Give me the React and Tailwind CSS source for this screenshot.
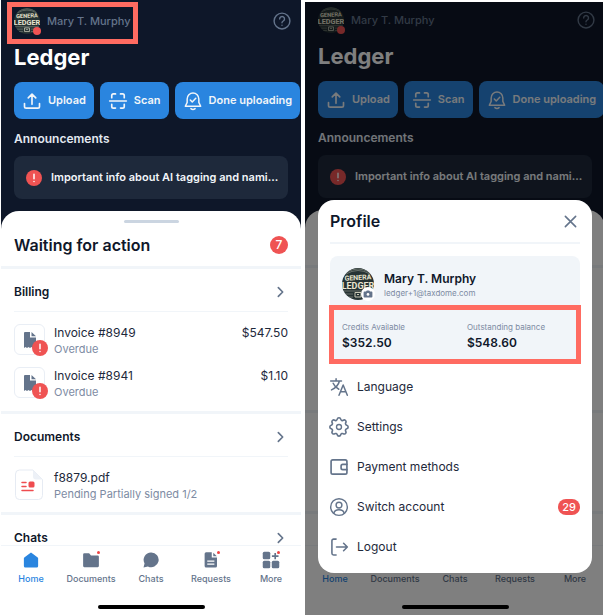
import { useId } from 'react'

const INVOICES = [
  { number: '8949', amount: '$547.50' },
  { number: '8941', amount: '$1.10' }
]

function Stroke({ children, className = 'size-5', width = 1.8 }) {
  return (
    <svg
      viewBox="0 0 24 24"
      fill="none"
      stroke="currentColor"
      strokeWidth={width}
      strokeLinecap="round"
      strokeLinejoin="round"
      className={`shrink-0 ${className}`}
      aria-hidden="true"
    >
      {children}
    </svg>
  )
}

function Solid({ children }) {
  return (
    <svg viewBox="0 0 24 24" fill="currentColor" className="size-[18px]" aria-hidden="true">
      {children}
    </svg>
  )
}

const UploadIcon = () => (
  <Stroke width={2}>
    <path d="M12 16V4M7.5 8.2 12 3.7l4.5 4.5M3 15v3.500a2 2 0 0 0 2 2h14a2 2 0 0 0 2-2V15" />
  </Stroke>
)

const ScanIcon = () => (
  <Stroke width={2}>
    <path d="M2 12h20M4.5 8V5.500a2 2 0 0 1 2-2H9M15 3.500h2.500a2 2 0 0 1 2 2V8M19.500 16v2.500a2 2 0 0 1-2 2H15M9 20.500H6.500a2 2 0 0 1-2-2V16" />
  </Stroke>
)

const BellCheckIcon = () => (
  <Stroke width={1.8}>
    <path d="M12 2.500a7 7 0 0 0-7 7v4.200l-2.200 4.600h18.400L19 13.700V9.500a7 7 0 0 0-7-7ZM9.500 21.200c1.400 1.100 3.600 1.100 5 0M8.800 10.800l2.300 2.300 4.200-4.300" />
  </Stroke>
)

const HelpIcon = () => (
  <Stroke width={1.7}>
    <circle cx="12" cy="12" r="9.500" />
    <path d="M9.200 9.500a2.900 2.900 0 1 1 4.400 2.500c-1.100.7-1.600 1.100-1.600 2.100M12 17v.1" />
  </Stroke>
)

const ChevronIcon = () => (
  <Stroke width={2.5} className="size-4 text-[#64748b]">
    <path d="m9.500 5.500 6.500 6.500-6.500 6.500" />
  </Stroke>
)

const LanguageIcon = () => (
  <Stroke>
    <path d="M2 4.800h13M8.500 2v2.800M12.500 4.800C11.500 9.500 8 13 3 15.500M5 7.500c1.200 3 3.500 5.500 6.800 7.200M12 22l5-12.500L22 22M13.800 17.700h6.400" />
  </Stroke>
)

const SettingsIcon = () => (
  <Stroke width={1.6}>
    <path d="M10.300 3.300c.4-1.800 3-1.800 3.400 0a1.700 1.700 0 0 0 2.600 1.100c1.500-1 3.300.8 2.400 2.400a1.700 1.700 0 0 0 1 2.500c1.800.5 1.800 3 0 3.400a1.700 1.700 0 0 0-1 2.600c.9 1.500-.9 3.300-2.400 2.400a1.700 1.700 0 0 0-2.600 1c-.4 1.800-3 1.800-3.400 0a1.700 1.700 0 0 0-2.600-1c-1.500.9-3.300-.9-2.400-2.400a1.700 1.700 0 0 0-1-2.600c-1.800-.4-1.800-2.900 0-3.400a1.700 1.700 0 0 0 1-2.500c-.9-1.600.9-3.400 2.400-2.400a1.700 1.700 0 0 0 2.600-1.100Z" transform="translate(-2.600 -1.400) scale(1.215)" />
    <circle cx="12" cy="12" r="3" />
  </Stroke>
)

const WalletIcon = () => (
  <Stroke width={2}>
    <rect x="2.500" y="3.500" width="19" height="17" rx="2" />
    <path d="M21.500 8.800h-5a2 2 0 0 0-2 2v2.400a2 2 0 0 0 2 2h5" />
  </Stroke>
)

const AccountIcon = () => (
  <Stroke width={1.7}>
    <circle cx="12" cy="12" r="10" />
    <circle cx="12" cy="9.700" r="3.500" />
    <path d="M5.800 19.500c.6-3 2.700-4.200 6.200-4.200s5.600 1.200 6.200 4.200" />
  </Stroke>
)

const LogoutIcon = () => (
  <Stroke width={1.9}>
    <path d="M8.500 2.500h-3a2 2 0 0 0-2 2v15a2 2 0 0 0 2 2h3M9 12h13M17.500 7.500 22 12l-4.500 4.500" />
  </Stroke>
)

const MENU = [
  { label: 'Language', Icon: LanguageIcon },
  { label: 'Settings', Icon: SettingsIcon },
  { label: 'Payment methods', Icon: WalletIcon },
  { label: 'Switch account', Icon: AccountIcon, count: 29 },
  { label: 'Logout', Icon: LogoutIcon }
]

const TABS = [
  {
    label: 'Home',
    active: true,
    icon: <path d="M12 2 3.500 8.200A2 2 0 0 0 2.500 9.800V20a2 2 0 0 0 2 2h15a2 2 0 0 0 2-2V9.800a2 2 0 0 0-1-1.600Z" />
  },
  {
    label: 'Documents',
    dot: true,
    icon: <path d="M1.500 4.500A1.500 1.500 0 0 1 3 3h6.500L12 6h9a1.500 1.500 0 0 1 1.500 1.500v12.500a1.500 1.500 0 0 1-1.500 1.500H3A1.500 1.500 0 0 1 1.500 20Z" />
  },
  {
    label: 'Chats',
    icon: <path d="M12.300 2a9.800 9.800 0 1 1-4.400 18.500L2 22l1.400-5.500A9.800 9.800 0 0 1 12.300 2Z" />
  },
  {
    label: 'Requests',
    dot: true,
    icon: (
      <>
        <path d="M5.500 1.500H13v7h7v11.500a2 2 0 0 1-2 2H5.500a2 2 0 0 1-2-2v-16.500a2 2 0 0 1 2-2Z" />
        <path d="M15 2.200 19.800 7H15Z" />
        <path d="M7 13.500h9.500M7 17.500h9.500" stroke="#fff" strokeWidth="1.600" />
      </>
    )
  },
  {
    label: 'More',
    dot: true,
    icon: (
      <>
        <rect x="1" y="1" width="10" height="10" rx="2" />
        <rect x="1" y="13" width="10" height="10" rx="2" />
        <rect x="13" y="13" width="10" height="10" rx="2" />
        <path d="M16.500 2.500h2.200v3.200H22v2.200h-3.300V11h-2.200V7.900h-3.300V5.700h3.300Z" />
      </>
    )
  }
]

function Avatar({ className }) {
  const id = useId()
  return (
    <svg viewBox="0 0 32 32" className={`block ${className}`} role="img" aria-label="General Ledger">
      <clipPath id={id}>
        <circle cx="16" cy="16" r="16" />
      </clipPath>
      <g clipPath={`url(#${id})`} fill="none">
        <rect width="32" height="32" fill="#263334" />
        <path d="M5 4q11-6 22 0M4 6q12-7 24 0M1 23h30M3 26h8m10 0h9M6 29h5m10 0h5" stroke="#68716b" />
        <path d="M13 24.500h6V29h-6zM15 26.500h2" stroke="#c8c8b6" />
      </g>
      <g fill="#e9e5d0" fontFamily="Roboto, sans-serif" fontWeight="700" textAnchor="middle">
        <text x="16" y="12" fontSize="7" transform="rotate(-3 16 12)">GENERA</text>
        <text x="16" y="21" fontSize="9">LEDGER</text>
      </g>
    </svg>
  )
}

function Alert({ className = '' }) {
  return (
    <svg viewBox="0 0 16 16" className={`size-4 shrink-0 ${className}`} role="img" aria-label="Alert">
      <circle cx="8" cy="8" r="8" fill="#ef5353" />
      <path d="M8 4.200v4.600M8 11.400v.1" stroke="#fff" strokeWidth="1.500" strokeLinecap="round" />
    </svg>
  )
}

function Section({ title, children }) {
  return (
    <section className="border-t-3 border-[#f1f5f9] px-[13px]">
      <button type="button" className="flex h-[43px] w-full items-center justify-between border-b border-[#f1f5f9] pt-1 text-[12px] font-semibold text-[#0f172a]">
        {title}
        <ChevronIcon />
      </button>
      {children}
    </section>
  )
}

function InvoiceIcon() {
  return (
    <span className="relative flex size-[31px] shrink-0 items-center justify-center rounded-md border border-[#e9eef5]">
      <svg viewBox="0 0 14 18" className="h-[18px] w-[14px] fill-[#64748b]" aria-hidden="true">
        <path d="M2 1h5v5.500h6V17l-1.500-1L10 17l-1.500-1L7 17l-1.500-1L4 17l-1.500-1L1 17V2a1 1 0 0 1 1-1Z" />
        <path d="M8.500 1 13 5.200H8.500Z" />
      </svg>
      <Alert className="absolute -right-1 -bottom-0.5" />
    </span>
  )
}

function PdfIcon() {
  return (
    <svg viewBox="0 0 31 32" className="h-8 w-[31px] shrink-0" fill="none" aria-hidden="true">
      <path d="M5.500 1H19l9.500 9.500v16a4 4 0 0 1-4 4h-19a4 4 0 0 1-4-4V5a4 4 0 0 1 4-4Z" fill="#fff" stroke="#e6ebf3" />
      <path d="M19 1v6.500a3 3 0 0 0 3 3h6.500Z" fill="#edf1f7" />
      <path d="M8 13.500h4M8 17.500h4M8 21.500h11" stroke="#ef4c4f" strokeWidth="1.500" strokeLinecap="round" />
      <rect x="14.500" y="12.500" width="6" height="6" rx="1.500" fill="#ef4c4f" />
    </svg>
  )
}

function HomeScreen({ headerClass }) {
  return (
    <div className="flex h-full flex-col bg-[#0e1729]">
      <header className={`px-[13px] ${headerClass}`}>
        <div className="flex h-[26px] items-center justify-between">
          <button type="button" className="flex items-center gap-[7px] text-[11px] font-medium text-[#64748b]">
            <span className="relative">
              <Avatar className="size-[26px]" />
              <span className="absolute -right-px -bottom-px size-2 rounded-full bg-[#ef5353]" />
            </span>
            Mary T. Murphy
          </button>
          <button type="button" aria-label="Help" className="-mr-1 text-[#64748b]">
            <HelpIcon />
          </button>
        </div>
        <h1 className="mt-[7px] text-[22px] leading-8 font-bold text-white">Ledger</h1>
      </header>

      <div className="mt-[9px] flex shrink-0 gap-1.5 overflow-hidden pl-[13px] text-[11px] font-semibold text-[#f1f5f9]">
        {[
          ['Upload', UploadIcon],
          ['Scan', ScanIcon],
          ['Done uploading', BellCheckIcon]
        ].map(([label, Icon]) => (
          <button key={label} type="button" className="flex h-[37px] shrink-0 items-center gap-1.5 rounded-lg bg-[#2a85df] px-2 whitespace-nowrap">
            <Icon />
            {label}
          </button>
        ))}
      </div>

      <section className="px-[13px] pt-3 pb-3">
        <h2 className="text-[12px] leading-4 font-semibold text-[#e2e8f0]">Announcements</h2>
        <a href="#announcement" className="mt-[9px] flex h-[43px] items-center gap-[9px] rounded-lg bg-[#1e293b] pl-3 text-[11px] font-semibold text-[#f1f5f9]">
          <Alert />
          <span className="whitespace-nowrap">Important info about AI tagging and nami...</span>
        </a>
      </section>

      <main className="flex min-h-0 flex-1 flex-col overflow-hidden rounded-t-[18px] bg-white text-[#0f172a]">
        <div className="mx-auto mt-[9px] h-[3px] w-[55px] shrink-0 rounded-full bg-[#cbd5e1]" />
        <div className="flex min-h-0 flex-1 flex-col overflow-hidden">
          <div className="flex h-[43px] shrink-0 items-center justify-between px-[13px]">
            <h2 className="text-[16px] font-semibold">Waiting for action</h2>
            <span className="flex size-[18px] items-center justify-center rounded-full bg-[#ef5353] text-[12px] font-medium text-white">7</span>
          </div>
          <Section title="Billing">
            <ul className="pt-3 pb-2.5">
              {INVOICES.map((invoice) => (
                <li key={invoice.number} className="mb-[9px] flex gap-[9px] text-[12px] leading-[17px] text-[#1e293b] last:mb-0">
                  <InvoiceIcon />
                  <div className="flex-1">
                    <p>Invoice #{invoice.number}</p>
                    <p className="text-[11px] text-[#7d8ba3]">Overdue</p>
                  </div>
                  <p>{invoice.amount}</p>
                </li>
              ))}
            </ul>
          </Section>
          <Section title="Documents">
            <div className="flex gap-[9px] pt-3 pb-[9px] text-[12px] leading-[17px] text-[#1e293b]">
              <PdfIcon />
              <div>
                <p>f8879.pdf</p>
                <p className="text-[11px] text-[#7d8ba3]">Pending Partially signed 1/2</p>
              </div>
            </div>
          </Section>
          <Section title="Chats" />
        </div>
      </main>

      <nav className="shrink-0 border-t border-[#f1f5f9] bg-white pb-1.5">
        <div className="grid grid-cols-5">
          {TABS.map((tab) => (
            <button
              key={tab.label}
              type="button"
              className={`flex flex-col items-center gap-0.5 pt-[5px] text-[9px] leading-4 font-medium ${tab.active ? 'text-[#2a85df]' : 'text-[#64748b]'}`}
            >
              <span className="relative">
                <Solid>{tab.icon}</Solid>
                {tab.dot && <span className="absolute top-0 right-0 size-[3px] rounded-full bg-[#ef4444]" />}
              </span>
              {tab.label}
            </button>
          ))}
        </div>
        <div className="mx-auto mt-[18px] h-1 w-[107px] rounded-full bg-black" />
      </nav>
    </div>
  )
}

function ProfileDialog() {
  return (
    <div className="absolute inset-0 flex items-end bg-black/50 px-[13px] pb-[42px]">
      <div role="dialog" aria-label="Profile" className="w-full rounded-2xl bg-white px-3 pb-1.5 text-[#0f172a]">
        <div className="flex h-11 items-center justify-between border-b-2 border-[#f1f5f9]">
          <h2 className="text-[16px] font-semibold">Profile</h2>
          <button type="button" aria-label="Close" className="text-[#64748b]">
            <Stroke width={2} className="size-[19px]">
              <path d="m5.500 5.500 13 13m0-13-13 13" />
            </Stroke>
          </button>
        </div>

        <div className="mt-3 rounded-t-lg bg-[#f1f5f9] px-3 pt-3 pb-[5px]">
          <div className="flex items-center gap-2.5">
            <span className="relative">
              <Avatar className="size-8" />
              <span className="absolute -right-px -bottom-px flex size-[14px] items-center justify-center rounded-full bg-white">
                <svg viewBox="0 0 12 10" className="h-2 w-[10px]" aria-hidden="true">
                  <path d="M1.500 2h2L4.500.5h3l1 1.500h2a1 1 0 0 1 1 1v5.500a1 1 0 0 1-1 1h-9a1 1 0 0 1-1-1V3a1 1 0 0 1 1-1Z" fill="#64748b" />
                  <circle cx="6" cy="5.500" r="1.700" fill="#fff" />
                </svg>
              </span>
            </span>
            <div>
              <p className="text-[12px] leading-[17px] font-semibold">Mary T. Murphy</p>
              <p className="text-[8px] leading-3 text-[#7d8ba3]">ledger+1@taxdome.com</p>
            </div>
          </div>
        </div>
        <dl className="-mx-px grid grid-cols-2 border-5 border-[#ff6b61] bg-[#f1f5f9] px-2 pt-[11px] pb-2">
          <div>
            <dt className="text-[8px] leading-3 text-[#7d8ba3]">Credits Available</dt>
            <dd className="mt-0.5 text-[12px] leading-4 font-semibold">$352.50</dd>
          </div>
          <div className="pl-3">
            <dt className="text-[8px] leading-3 text-[#7d8ba3]">Outstanding balance</dt>
            <dd className="mt-0.5 text-[12px] leading-4 font-semibold">$548.60</dd>
          </div>
        </dl>

        <ul className="-ml-px pt-[3px]">
          {MENU.map(({ label, Icon, count }) => (
            <li key={label}>
              <button type="button" className="flex h-10 w-full items-center gap-2 text-[12px] text-[#1e293b]">
                <span className="text-[#64748b]">
                  <Icon />
                </span>
                {label}
                {count && <span className="ml-auto rounded-full bg-[#ef5353] px-1 text-[11px] leading-4 font-medium text-white">{count}</span>}
              </button>
            </li>
          ))}
        </ul>
      </div>
    </div>
  )
}

export default function App() {
  return (
    <div className="h-screen overflow-hidden bg-white font-[Inter,sans-serif]">
      <div className="-mr-0.5 grid h-full grid-cols-2 gap-1 pl-px">
        <div className="relative min-h-0 min-w-0 overflow-hidden">
          <HomeScreen headerClass="pt-2" />
          <div className="pointer-events-none absolute top-0.5 left-1.5 h-[42px] w-[131px] border-5 border-[#ff6b61]" />
        </div>
        <div className="min-h-0 min-w-0 pt-0.5">
          <div className="relative h-full overflow-hidden">
            <HomeScreen headerClass="pt-[5px]" />
            <ProfileDialog />
          </div>
        </div>
      </div>
    </div>
  )
}
